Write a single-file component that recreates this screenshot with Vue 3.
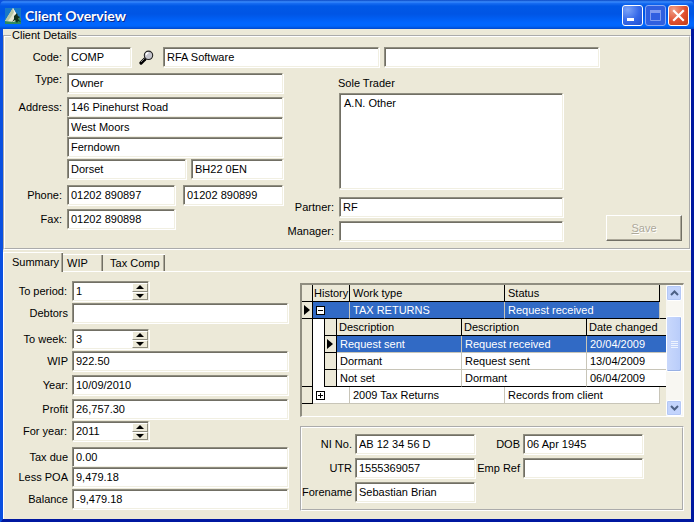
<script setup>
import { reactive, ref } from 'vue'

const client = reactive({
  code: 'COMP',
  name: 'RFA Software',
  extra: '',
  type: 'Owner',
  address1: '146 Pinehurst Road',
  address2: 'West Moors',
  address3: 'Ferndown',
  county: 'Dorset',
  postcode: 'BH22 0EN',
  phone: '01202 890897',
  phone2: '01202 890899',
  fax: '01202 890898',
  soleTrader: 'A.N. Other',
  partner: 'RF',
  manager: ''
})

const summary = reactive([
  { id: 'period', label: 'To period:', value: '1', spin: true, gap: '' },
  { id: 'debtors', label: 'Debtors', value: '', gap: 'gap-s' },
  { id: 'week', label: 'To week:', value: '3', spin: true, gap: 'gap-l' },
  { id: 'wip', label: 'WIP', value: '922.50', gap: 'gap-s' },
  { id: 'year', label: 'Year:', value: '10/09/2010', gap: 'gap-m' },
  { id: 'profit', label: 'Profit', value: '26,757.30', gap: 'gap-m' },
  { id: 'foryear', label: 'For year:', value: '2011', spin: true, gap: 'gap-s' },
  { id: 'taxdue', label: 'Tax due', value: '0.00', gap: 'gap-l' },
  { id: 'poa', label: 'Less POA', value: '9,479.18', gap: '' },
  { id: 'balance', label: 'Balance', value: '-9,479.18', gap: 'gap-s' }
])

const step = (row, by) => {
  row.value = String(Number(row.value) + by)
}

const personal = reactive({
  ni: 'AB 12 34 56 D',
  dob: '06 Apr 1945',
  utr: '1555369057',
  empRef: '',
  forename: 'Sebastian Brian'
})

const tabs = ['Summary', 'WIP', 'Tax Comp']
const activeTab = ref('Summary')

const history = [
  { from: 'Request sent', to: 'Request received', date: '20/04/2009' },
  { from: 'Dormant', to: 'Request sent', date: '13/04/2009' },
  { from: 'Not set', to: 'Dormant', date: '06/04/2009' }
]
const selected = ref(0)
</script>

<template>
  <div class="window">
    <header class="titlebar">
      <svg class="app-icon" width="16" height="16" viewBox="0 0 16 16" aria-hidden="true">
        <rect width="16" height="16" fill="#1878c8" />
        <path d="M0 12 L4 9 L16 10 V16 H0 Z" fill="#2f8a5c" />
        <path d="M8 0 L14 10 L9 14 L0 13 Z" fill="#e4e6cf" />
        <path d="M8 0 L9 4 L6 9 L3 13 L0 13 Z" fill="#b9c8a4" />
        <path d="M8 0 L13 9 L10 8 Z" fill="#f8f6e8" />
        <path d="M9 8 L12 5 L13 8 L15 9 L13 11 L16 14 L13 13 L12 15 L10 12 L7 14 L9 11 Z" fill="#12301c" />
      </svg>
      <h1 class="title">Client Overview</h1>
      <div class="caption-buttons">
        <button type="button" class="cap" aria-label="Minimize">
          <svg width="19" height="19" viewBox="0 0 19 19"><rect x="4" y="12" width="7" height="3" fill="#fff" /></svg>
        </button>
        <button type="button" class="cap cap-off" aria-label="Maximize" disabled>
          <svg width="19" height="19" viewBox="0 0 19 19"><path d="M4.5 5 V14.5 H14.5 V5" fill="none" stroke="#7f9cf0" /><rect x="4" y="4" width="11" height="3" fill="#7f9cf0" /></svg>
        </button>
        <button type="button" class="cap cap-close" aria-label="Close">
          <svg width="19" height="19" viewBox="0 0 19 19"><path d="M5 5 L14 14 M14 5 L5 14" stroke="#fff" stroke-width="2.2" stroke-linecap="square" /></svg>
        </button>
      </div>
    </header>

    <main class="client">
      <fieldset class="details">
        <legend>Client Details</legend>
        <div class="row code-row">
          <label class="lbl" for="code">Code:</label>
          <input id="code" v-model="client.code" class="field code" type="text">
          <button type="button" class="find" aria-label="Find client">
            <svg width="15" height="15" viewBox="0 0 15 15">
              <path d="M6 9 L2 13" stroke="#000" stroke-width="3.2" stroke-linecap="round" />
              <path d="M5.5 8.5 L2 12" stroke="#8c8c8c" stroke-width="1" />
              <circle cx="9.5" cy="5.3" r="4.2" fill="#c4c4cc" stroke="#222" stroke-width="1.1" />
              <path d="M7.2 5.2 A2.4 2.4 0 0 1 9.5 2.8" fill="none" stroke="#fff" stroke-width="1.4" />
            </svg>
          </button>
          <input v-model="client.name" class="field" type="text" aria-label="Client name">
          <input v-model="client.extra" class="field extra" type="text" aria-label="Client name, continued">
        </div>

        <div class="detail-grid">
          <div class="col">
            <div class="row row-top">
              <label class="lbl" for="type">Type:</label>
              <input id="type" v-model="client.type" class="field" type="text">
            </div>
            <div class="row gap-m">
              <label class="lbl" for="address">Address:</label>
              <input id="address" v-model="client.address1" class="field" type="text">
            </div>
            <div class="row indent">
              <input v-model="client.address2" class="field" type="text" aria-label="Address line 2">
            </div>
            <div class="row indent">
              <input v-model="client.address3" class="field" type="text" aria-label="Address line 3">
            </div>
            <div class="row indent gap-s county-row">
              <input v-model="client.county" class="field" type="text" aria-label="County">
              <input v-model="client.postcode" class="field" type="text" aria-label="Postcode">
            </div>
            <div class="phone-row gap-l">
              <label class="lbl" for="phone">Phone:</label>
              <input id="phone" v-model="client.phone" class="field" type="text">
              <input v-model="client.phone2" class="field" type="text" aria-label="Second phone">
            </div>
            <div class="phone-row gap-m">
              <label class="lbl" for="fax">Fax:</label>
              <input id="fax" v-model="client.fax" class="field" type="text">
            </div>
          </div>

          <div class="col trader">
            <label class="trader-label" for="trader">Sole Trader</label>
            <textarea id="trader" v-model="client.soleTrader" class="field memo"></textarea>
            <div class="row partner">
              <label class="lbl" for="partner">Partner:</label>
              <input id="partner" v-model="client.partner" class="field" type="text">
            </div>
            <div class="row gap-m">
              <label class="lbl" for="manager">Manager:</label>
              <input id="manager" v-model="client.manager" class="field" type="text">
            </div>
          </div>

          <div class="actions">
            <button type="button" class="save" disabled><u>S</u>ave</button>
          </div>
        </div>
      </fieldset>

      <div class="tabs" role="tablist">
        <button
          v-for="tab in tabs"
          :key="tab"
          type="button"
          role="tab"
          class="tab"
          :class="{ active: tab === activeTab }"
          :aria-selected="tab === activeTab"
          @click="activeTab = tab"
        >{{ tab }}</button>
        <span class="tab-rest"></span>
      </div>

      <section class="panel" role="tabpanel">
        <div class="col summary">
          <div v-for="row in summary" :key="row.id" class="row" :class="row.gap">
            <label class="lbl" :class="{ colon: row.spin }" :for="row.id">{{ row.label }}</label>
            <div v-if="row.spin" class="field spin">
              <input :id="row.id" v-model="row.value" type="text">
              <div class="spin-buttons">
                <button type="button" aria-label="Increase" @click="step(row, 1)">
                  <svg width="8" height="4" viewBox="0 0 8 4"><path d="M0 4 L4 0 L8 4 Z" /></svg>
                </button>
                <button type="button" aria-label="Decrease" @click="step(row, -1)">
                  <svg width="8" height="4" viewBox="0 0 8 4"><path d="M0 0 L4 4 L8 0 Z" /></svg>
                </button>
              </div>
            </div>
            <input v-else :id="row.id" v-model="row.value" class="field" type="text">
          </div>
        </div>

        <div class="col">
          <div class="grid-box">
            <table class="outer">
              <colgroup><col class="c-ind"><col class="c-hist"><col><col><col class="c-fill"></colgroup>
              <thead>
                <tr><th></th><th class="hist">History</th><th>Work type</th><th>Status</th><td class="fill"></td></tr>
              </thead>
              <tbody>
                <tr class="selected">
                  <th><svg class="marker" width="6" height="10" viewBox="0 0 6 10"><path d="M0 0 L6 5 L0 10 Z" /></svg></th>
                  <td class="toggle">
                    <button type="button" class="box" aria-label="Collapse"><svg width="7" height="7" viewBox="0 0 7 7"><path d="M1 3.5 H6" stroke="#000" /></svg></button>
                  </td>
                  <td>TAX RETURNS</td>
                  <td>Request received</td>
                  <td class="fill"></td>
                </tr>
                <tr>
                  <th></th>
                  <td colspan="4" class="nest">
                    <table class="inner">
                      <colgroup><col class="c-ind2"><col><col><col class="c-date"></colgroup>
                      <thead>
                        <tr><th></th><th>Description</th><th>Description</th><th>Date changed</th></tr>
                      </thead>
                      <tbody>
                        <tr v-for="(h, i) in history" :key="h.date" :class="{ selected: i === selected }" @click="selected = i">
                          <th><svg v-if="i === selected" class="marker" width="6" height="10" viewBox="0 0 6 10"><path d="M0 0 L6 5 L0 10 Z" /></svg></th>
                          <td>{{ h.from }}</td>
                          <td>{{ h.to }}</td>
                          <td>{{ h.date }}</td>
                        </tr>
                      </tbody>
                    </table>
                  </td>
                </tr>
                <tr>
                  <th></th>
                  <td class="toggle">
                    <button type="button" class="box" aria-label="Expand"><svg width="7" height="7" viewBox="0 0 7 7"><path d="M1 3.5 H6 M3.5 1 V6" stroke="#000" /></svg></button>
                  </td>
                  <td>2009 Tax Returns</td>
                  <td>Records from client</td>
                  <td class="fill"></td>
                </tr>
              </tbody>
            </table>
            <div class="scroll">
              <button type="button" class="sb" aria-label="Scroll up"><svg width="9" height="6" viewBox="0 0 9 6"><path d="M1 5 L4.5 1.5 L8 5" /></svg></button>
              <div class="track">
                <div class="thumb"><i></i><i></i><i></i><i></i></div>
              </div>
              <button type="button" class="sb" aria-label="Scroll down"><svg width="9" height="6" viewBox="0 0 9 6"><path d="M1 1 L4.5 4.5 L8 1" /></svg></button>
            </div>
          </div>

          <div class="personal">
            <label class="lbl" for="ni">NI No.</label>
            <input id="ni" v-model="personal.ni" class="field" type="text">
            <label class="lbl" for="dob">DOB</label>
            <input id="dob" v-model="personal.dob" class="field" type="text">
            <label class="lbl" for="utr">UTR</label>
            <input id="utr" v-model="personal.utr" class="field" type="text">
            <label class="lbl" for="emp">Emp Ref</label>
            <input id="emp" v-model="personal.empRef" class="field" type="text">
            <label class="lbl" for="forename">Forename</label>
            <input id="forename" v-model="personal.forename" class="field" type="text">
          </div>
        </div>
      </section>
    </main>
  </div>
</template>

<style>
body {
  margin: 0;
  background: #ece9d8;
}
</style>

<style scoped>
* {
  box-sizing: border-box;
}

.window {
  display: flex;
  flex-direction: column;
  min-height: 100vh;
  font: 11px/13px "Liberation Sans", Arial, sans-serif;
  color: #000;
  background: #0a50e0;
}

button,
input,
textarea {
  font: inherit;
  color: inherit;
  margin: 0;
  padding: 0;
  border: 0;
  border-radius: 0;
  outline: 0;
}

.titlebar {
  display: flex;
  align-items: center;
  height: 29px;
  padding: 2px 5px 0 5px;
  border-radius: 6px 6px 0 0;
  background: linear-gradient(#0a48c4 0, #3c8eff 2px, #1a6ef2 3px, #0058e6 6px, #0055e5 14px, #0066ff 23px, #0066fc 26px, #0048cc 29px);
}

.app-icon {
  flex: none;
}

.title {
  flex: 1;
  margin: 0 0 0 4px;
  font: bold 14px/18px Lato, "Noto Sans", sans-serif;
  color: #fff;
  text-shadow: 1px 1px 0 #0a2a8c;
}

.caption-buttons {
  display: flex;
  gap: 2px;
}

.cap {
  display: flex;
  width: 21px;
  height: 21px;
  border: 1px solid #fff;
  border-radius: 3px;
  background: radial-gradient(circle at 25% 20%, #7ca4f8, #3568e8 55%, #2050d0);
}

.cap-off {
  border-color: #88a8f4;
  background: #2f5fe0;
}

.cap-close {
  background: radial-gradient(circle at 25% 20%, #f0a088, #e05030 55%, #c03c14);
}

.client {
  flex: 1;
  display: flex;
  flex-direction: column;
  border: solid #0018a0;
  border-width: 0 3px 4px 3px;
  border-left-color: #0a50e0;
  background: #ece9d8;
}

.details {
  min-width: 0;
  margin: 0;
  padding: 5px 0 7px;
  border: 2px groove #fff;
}

.details legend {
  margin-left: 6px;
  padding: 0 1px;
}

.row {
  display: flex;
  align-items: center;
}

.row-top {
  align-items: flex-start;
}

.gap-s {
  margin-top: 2px;
}

.gap-m {
  margin-top: 4px;
}

.gap-l {
  margin-top: 6px;
}

.lbl {
  flex: none;
  width: 62px;
  padding-right: 5px;
  text-align: right;
  white-space: nowrap;
}

.field {
  flex: 1 1 0;
  display: block;
  width: 100%;
  min-width: 0;
  height: 20px;
  padding: 0 3px;
  border: 1px solid;
  border-color: #8f8d80 #f1efe2 #f1efe2 #8f8d80;
  background: #fff;
  box-shadow: inset 1px 1px 0 #716f64, 1px 1px 0 #fff;
}

.code-row {
  padding-right: 90px;
  margin-bottom: 6px;
}

.field.code {
  flex: none;
  width: 64px;
}

.field.extra {
  margin-left: 5px;
}

.find {
  display: flex;
  flex: none;
  width: 32px;
  padding-left: 8px;
  background: none;
}

.detail-grid {
  display: grid;
  grid-template-columns: minmax(0, 278fr) minmax(0, 280fr) 126px;
}

.col {
  display: flex;
  flex-direction: column;
  min-width: 0;
}

.indent {
  padding-left: 62px;
}

.county-row {
  display: grid;
  grid-template-columns: 119fr 92fr;
  gap: 5px;
}

.phone-row {
  display: grid;
  grid-template-columns: 62px 108fr 108fr;
  align-items: center;
}

.phone-row .field + .field {
  width: auto;
  margin-left: 8px;
}

.trader .lbl {
  width: 56px;
}

.trader-label {
  margin: 4px 0 3px 55px;
}

.field.memo {
  flex: none;
  width: auto;
  height: 96px;
  margin-left: 56px;
  padding: 3px 4px;
  resize: none;
}

.partner {
  margin-top: 8px;
}

.actions {
  display: flex;
  align-items: flex-end;
  justify-content: flex-end;
  padding-right: 7px;
}

.save {
  width: 76px;
  height: 26px;
  border: 1px solid;
  border-color: #fff #716f64 #716f64 #fff;
  background: #ece9d8;
  box-shadow: inset -1px -1px 0 #aca899;
  color: #aca899;
  text-shadow: 1px 1px 0 #fff;
}

.tabs {
  display: flex;
  align-items: flex-end;
  height: 22px;
}

.tab {
  height: 18px;
  padding: 0 5px 0 4px;
  border: solid #fff;
  border-width: 1px 0;
  background: #ece9d8;
  box-shadow: inset -1px 0 0 #716f64, inset -2px 0 0 #aca899;
  text-align: left;
}

.tab.active {
  height: 20px;
  padding: 0 4px 0 8px;
  border-width: 1px 0 0 1px;
}

.tab:nth-child(2) {
  width: 40px;
}

.tab:nth-child(3) {
  padding-left: 7px;
}

.tab-rest {
  flex: 1;
  border-bottom: 1px solid #fff;
}

.panel {
  flex: 1;
  display: grid;
  grid-template-columns: minmax(0, 284fr) minmax(0, 384fr);
  gap: 12px;
  align-items: start;
  padding: 9px 7px 8px 0;
  border-left: 1px solid #fff;
}

.summary .lbl {
  width: 68px;
  padding-right: 4px;
}

.summary .lbl.colon {
  padding-right: 5px;
}

.field.spin {
  display: flex;
  flex: none;
  width: 77px;
  padding: 0 0 0 3px;
}

.spin input {
  flex: 1;
  min-width: 0;
  background: transparent;
}

.spin-buttons {
  display: flex;
  flex-direction: column;
  width: 16px;
  margin: 1px 0 0;
}

.spin-buttons button {
  display: flex;
  flex: 1;
  align-items: center;
  justify-content: center;
  border: 1px solid;
  border-color: #fff #8f8d80 #8f8d80 #fff;
  background: #ece9d8;
}

.spin-buttons svg {
  flex: none;
}

.grid-box {
  display: flex;
  height: 134px;
  margin-top: 2px;
  border: solid;
  border-width: 2px 1px 1px 2px;
  border-color: #8f8d80 #fff #fff #8f8d80;
}

table {
  border-collapse: separate;
  border-spacing: 0;
  table-layout: fixed;
  width: 100%;
}

.outer {
  flex: 1;
  align-self: flex-start;
  min-width: 0;
}

.c-ind {
  width: 11px;
}

.c-hist {
  width: 37px;
}

.c-fill {
  width: 6px;
}

.c-ind2 {
  width: 12px;
}

.c-date {
  width: 79px;
}

th,
td {
  height: 17px;
  padding: 0 0 0 3px;
  border: solid #c8c5b8;
  border-width: 0 1px 1px 0;
  background: #fff;
  font-weight: normal;
  line-height: 13px;
  text-align: left;
  white-space: nowrap;
  overflow: hidden;
}

th {
  border-color: #000;
  background: #ece9d8;
}

th.hist {
  padding-left: 1px;
}

tbody th {
  padding: 0 0 0 2px;
}

.selected td {
  background: #316ac5;
  color: #fff;
}

.outer > tbody > .selected td {
  border-bottom-color: #000;
}

.outer .fill {
  border: 0;
  background: #ece9d8;
}

.outer > tbody > .selected .fill {
  border-bottom: 1px solid #000;
}

.outer .nest {
  padding: 0 0 0 11px;
  border: 0;
}

.inner {
  border-left: 1px solid #000;
}

.inner tr > :last-child {
  border-right: 0;
}

.inner tr:last-child td {
  border-bottom-color: #000;
}

.marker {
  display: block;
}

.box {
  display: block;
  width: 9px;
  height: 9px;
  border: 1px solid #000;
  background: #fff;
}

.box svg {
  display: block;
}

.scroll {
  display: flex;
  flex: none;
  flex-direction: column;
  width: 17px;
  background: #f8f7f2;
}

.sb {
  display: flex;
  flex: none;
  align-items: center;
  justify-content: center;
  width: 16px;
  height: 16px;
  border: 1px solid #fff;
  border-radius: 2px;
  background: #c3d4fc;
  box-shadow: inset 0 0 0 1px #b4c8f6;
}

.sb path {
  fill: none;
  stroke: #4d6185;
  stroke-width: 2;
}

.track {
  flex: 1;
  padding-top: 15px;
}

.thumb {
  display: flex;
  flex-direction: column;
  align-items: center;
  justify-content: center;
  gap: 1px;
  width: 16px;
  height: 56px;
  border: 1px solid #fff;
  border-radius: 2px;
  background: linear-gradient(90deg, #c9d8fc, #b8ccfa);
  box-shadow: inset -1px -1px 0 #98b0e4;
}

.thumb i {
  width: 7px;
  height: 1px;
  background: #eef4fe;
}

.personal {
  display: grid;
  grid-template-columns: 53px minmax(0, 1fr) 48px minmax(0, 1fr);
  align-items: center;
  row-gap: 4px;
  margin-top: 9px;
  padding: 6px 39px 7px 0;
  border: 2px groove #fff;
}

.personal .lbl {
  width: auto;
  padding-right: 3px;
}
</style>
